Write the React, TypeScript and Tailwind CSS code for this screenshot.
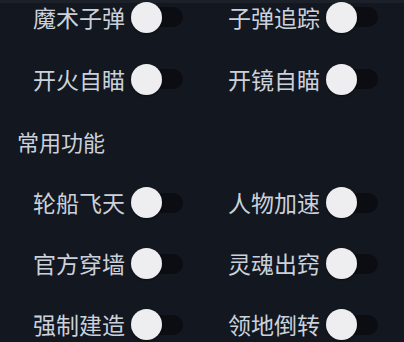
import React from "react"

const font = { fontFamily: '"Noto Sans CJK SC", "Noto Sans", sans-serif' }

type Row = [string, string]

const top: Row[] = [
  ["魔术子弹", "子弹追踪"],
  ["开火自瞄", "开镜自瞄"],
]

const common: Row[] = [
  ["轮船飞天", "人物加速"],
  ["官方穿墙", "灵魂出窍"],
  ["强制建造", "领地倒转"],
]

function Toggle() {
  return (
    <div className="relative w-[52px] h-[31px] flex items-center">
      <div className="ml-[8px] w-[44px] h-[20px] rounded-full bg-[#0b0d12]" />
      <div className="absolute left-0 top-0 w-[31px] h-[31px] rounded-full bg-[#eeeef0] shadow-[0_1px_2px_rgba(0,0,0,0.5)]" />
    </div>
  )
}

function Item({ label }: { label: string }) {
  return (
    <div className="flex items-center gap-[6px] pl-[33px]">
      <span className="text-[23px] leading-none text-[#cbd1db]">{label}</span>
      <Toggle />
    </div>
  )
}

function Rows({ rows, h }: { rows: Row[]; h: string }) {
  return (
    <>
      {rows.map(([a, b]) => (
        <div key={a} className={`grid grid-cols-[195px_209px] items-center ${h}`}>
          <Item label={a} />
          <Item label={b} />
        </div>
      ))}
    </>
  )
}

export default function App() {
  return (
    <div className="w-[404px] h-[342px] overflow-hidden bg-[#131720]" style={font}>
      <div className="h-[3px] bg-[#1c2029]" />
      <div className="-mt-[17px]">
        <Rows rows={top} h="h-[62px]" />
        <div className="h-[62px] flex items-center pl-[17px]">
          <span className="text-[22px] leading-none text-[#cbd1db]">常用功能</span>
        </div>
        <Rows rows={common} h="h-[61px]" />
      </div>
    </div>
  )
}
